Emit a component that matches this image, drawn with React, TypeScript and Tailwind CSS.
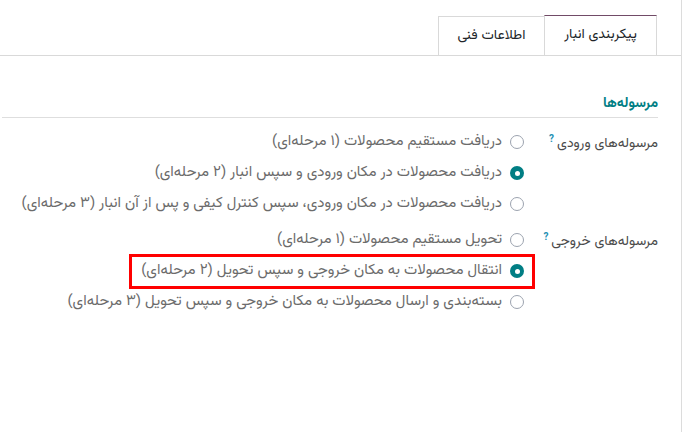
import React from 'react';

type Option = { label: string; checked?: boolean; marked?: boolean };

const incoming: Option[] = [
  { label: 'دریافت مستقیم محصولات (۱ مرحله‌ای)' },
  { label: 'دریافت محصولات در مکان ورودی و سپس انبار (۲ مرحله‌ای)', checked: true },
  { label: 'دریافت محصولات در مکان ورودی، سپس کنترل کیفی و پس از آن انبار (۳ مرحله‌ای)' },
];

const outgoing: Option[] = [
  { label: 'تحویل مستقیم محصولات (۱ مرحله‌ای)' },
  { label: 'انتقال محصولات به مکان خروجی و سپس تحویل (۲ مرحله‌ای)', checked: true, marked: true },
  { label: 'بسته‌بندی و ارسال محصولات به مکان خروجی و سپس تحویل (۳ مرحله‌ای)' },
];

function Radio({ checked }: { checked?: boolean }) {
  if (checked) {
    return (
      <span className="flex h-[14px] w-[14px] shrink-0 items-center justify-center rounded-full bg-[#017e84]">
        <span className="h-[5px] w-[5px] rounded-full bg-white" />
      </span>
    );
  }
  return <span className="h-[14px] w-[14px] shrink-0 rounded-full border border-[#9ca3af] bg-white" />;
}

function Group({ title, options }: { title: string; options: Option[] }) {
  return (
    <div className="flex">
      <div className="w-[134px] shrink-0 pt-[3px] text-[#4b4b4b]">
        {title}
        <sup className="mr-[3px] text-[10px] font-bold text-[#1d8fb3]">?</sup>
      </div>
      <div className="flex flex-col items-start gap-[9px]">
        {options.map((o) => (
          <div key={o.label} className="relative flex h-[22px] items-center gap-2 text-[15px] text-[#6b6b6b]">
            <Radio checked={o.checked} />
            <span className="whitespace-nowrap">{o.label}</span>
            {/* annotation box around the picked option */}
            {o.marked && (
              <span className="absolute -top-[6px] -right-[11px] -bottom-[7px] -left-[12px] border-[3px] border-[#ff0000]" />
            )}
          </div>
        ))}
      </div>
    </div>
  );
}

export default function App() {
  return (
    <div
      dir="rtl"
      className="h-[432px] w-[682px] border-r border-[#dcdcdc] bg-white text-[14px]"
      style={{ fontFamily: '"Vazirmatn", "DejaVu Sans", sans-serif' }}
    >
      {/* tabs */}
      <div className="flex border-b border-[#d9d9d9] pr-[24px] pt-[15px]">
        <div className="-mb-px flex h-[40px] w-[113px] items-center justify-center border-x border-t border-[#d9d9d9] border-t-[#714b67] bg-white text-[#212529]">
          پیکربندی انبار
        </div>
        <div className="mt-px flex h-[39px] w-[106px] items-center justify-center border-l border-t border-[#d9d9d9] text-[#212529]">
          اطلاعات فنی
        </div>
      </div>

      {/* section */}
      <div className="pl-[2px] pr-[23px] pt-[38px]">
        <div className="border-b border-[#dedede] pb-[2px] font-bold text-[#017e84]">مرسوله‌ها</div>
        <div className="flex flex-col gap-[14px] pt-[13px]">
          <Group title="مرسوله‌های ورودی" options={incoming} />
          <Group title="مرسوله‌های خروجی" options={outgoing} />
        </div>
      </div>
    </div>
  );
}
